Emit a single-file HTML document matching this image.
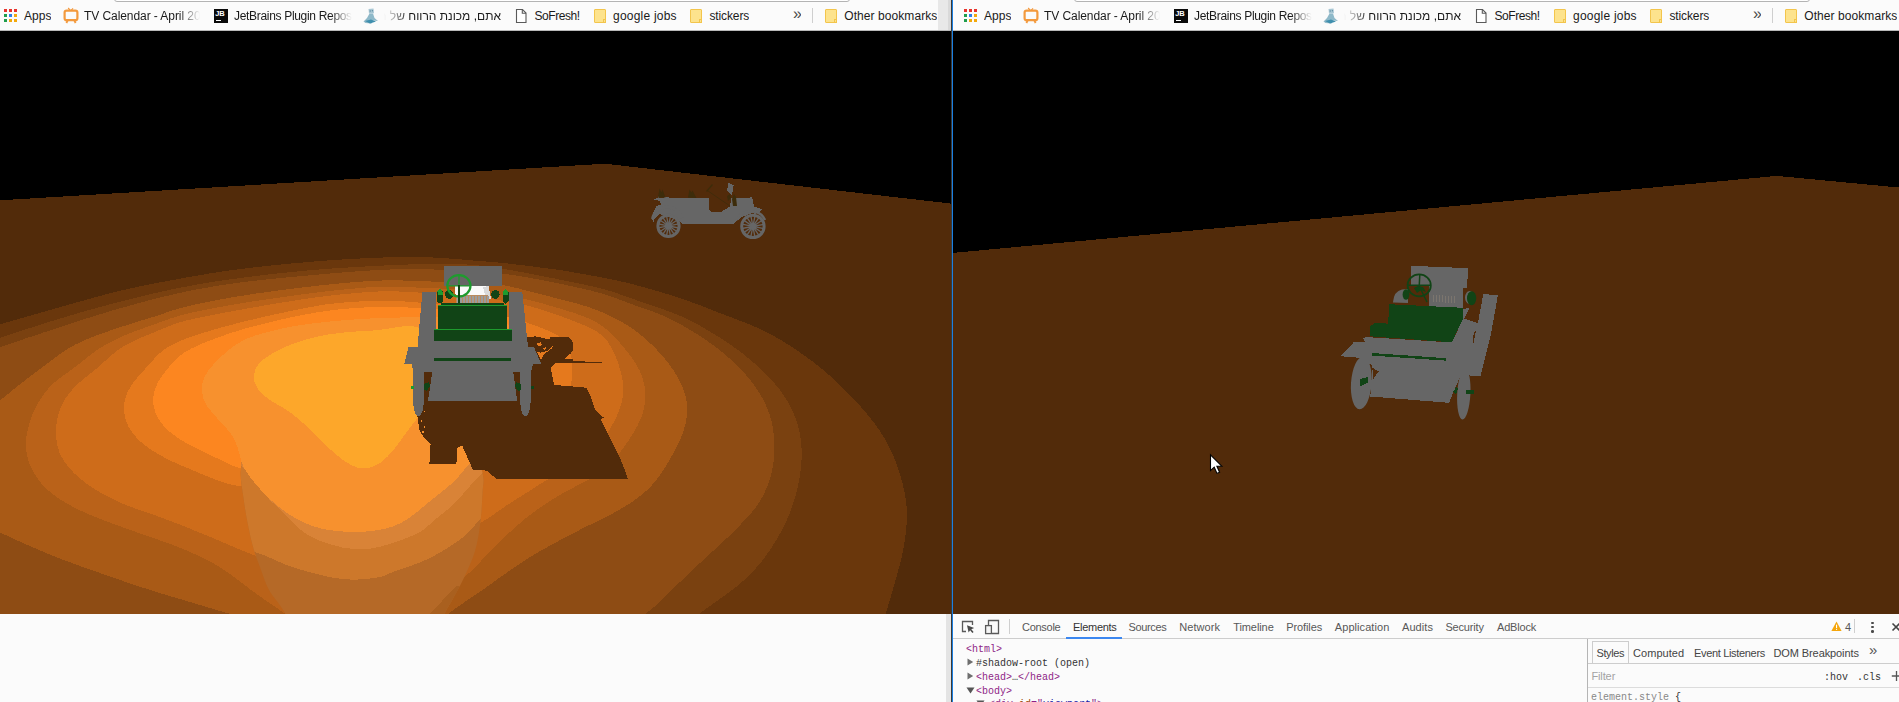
<!DOCTYPE html><html><head><meta charset="utf-8"><title>scene</title><style>
html,body{margin:0;padding:0}
body{width:1899px;height:702px;position:relative;overflow:hidden;background:#fbfbfb;font-family:"Liberation Sans","DejaVu Sans",sans-serif;font-size:12px;color:#111}
.bar{position:absolute;top:0;height:30px;background:#fbfbfb;overflow:hidden;border-bottom:1px solid #b9b9b9}
.omni{position:absolute;left:114px;top:-6px;width:736px;height:8px;border:1px solid #b4b4b4;border-radius:3px;background:#fff;box-sizing:border-box}
.dot{position:absolute;width:3px;height:3px;display:block}
.bm{position:absolute;top:9px;line-height:15px;height:16px;white-space:nowrap;overflow:hidden;color:#1a1a1a;font-size:12px}
.fade{-webkit-mask-image:linear-gradient(90deg,#000 82%,transparent 100%);mask-image:linear-gradient(90deg,#000 82%,transparent 100%)}
.fadel{-webkit-mask-image:linear-gradient(270deg,#000 78%,transparent 100%);mask-image:linear-gradient(270deg,#000 78%,transparent 100%)}
.heb{font-family:"Liberation Sans","DejaVu Sans",sans-serif;text-align:right}
.ic{position:absolute;display:block}
.jb{position:absolute;width:14px;height:14px;background:#0a0a0a}
.jb span{position:absolute;left:1.2px;top:1.4px;font:bold 7.5px/8px "Liberation Sans",sans-serif;color:#fff;letter-spacing:-.2px}
.jb i{position:absolute;left:2px;top:11px;width:5px;height:1px;background:#fff}
.folder{position:absolute;top:9px;width:12px;height:14px;background:#fde38d;border:1px solid #f3c54c;box-sizing:border-box;border-radius:1px}
.folder i{position:absolute;right:-1px;bottom:-1px;width:3px;height:4px;border:1px solid #f3c54c;box-sizing:border-box;background:#fde38d}
.chev{font-size:16px;top:6px;color:#4a4a4a;letter-spacing:-.5px}
.bsep{position:absolute;top:8px;width:1px;height:15px;background:#cfcfcf}
.scene{position:absolute;display:block}
#dt{position:absolute;left:0;top:0}
.tb{position:absolute;left:953px;top:614px;width:946px;height:24px;background:#fbfbfb;border-bottom:1px solid #cdcdcd}
.vsep{position:absolute;width:1px;background:#cfcfcf}
.tab{position:absolute;top:620px;line-height:15px;font-size:12px;color:#585858;white-space:nowrap}
.sel{position:absolute;top:637px;height:2px;background:#3b87f0}
.kd{position:absolute;width:2.6px;height:2.6px;border-radius:50%;background:#4a4a4a;display:block}
.row{position:absolute;font:10px/14px "Liberation Mono","DejaVu Sans Mono",monospace;white-space:nowrap;color:#333}
.tg{color:#8e1f86}.an{color:#994500}.av{color:#1a1aa6}.tx{color:#333}
.side{position:absolute;left:1587px;top:639px;width:1px;height:64px;background:#b5b5b5}
.stabline{position:absolute;left:1588px;top:663px;width:311px;height:1px;background:#cdcdcd}
.stab{position:absolute;left:1592px;top:641px;width:37px;height:22px;border:1px solid #cdcdcd;border-bottom:none;box-sizing:border-box;background:#fbfbfb}
.st{top:646px;color:#444}
.chev2{font-size:15px;color:#555}
.flt{top:669px;color:#a3a3a3}
.mono{position:absolute;font:10px/14px "Liberation Mono","DejaVu Sans Mono",monospace;white-space:nowrap;color:#333}
.hov{top:671px}
.fline{position:absolute;left:1588px;top:687px;width:311px;height:1px;background:#dcdcdc}
.es{top:691px}
</style></head><body>
<div style="position:absolute;left:938px;top:0;width:10px;height:30px;background:#e8e8e8"></div>
<div class="bar" style="left:0px;width:938px"><div style="position:absolute;left:0px;top:0">
<div class="omni"></div>
<i class="dot" style="left:4px;top:9px;background:#e8342c"></i>
<i class="dot" style="left:9px;top:9px;background:#e8342c"></i>
<i class="dot" style="left:14px;top:9px;background:#e8342c"></i>
<i class="dot" style="left:4px;top:14px;background:#1f9d4d"></i>
<i class="dot" style="left:9px;top:14px;background:#2e7fe8"></i>
<i class="dot" style="left:14px;top:14px;background:#f3a90b"></i>
<i class="dot" style="left:4px;top:19px;background:#1f9d4d"></i>
<i class="dot" style="left:9px;top:19px;background:#f3a90b"></i>
<i class="dot" style="left:14px;top:19px;background:#f3a90b"></i>
<span class="bm" style="left:24px;font-size:12.0px;letter-spacing:0.010px">Apps</span>
<svg class="ic" style="left:63px;top:7px" width="16" height="17" viewBox="0 0 16 17"><path d="M5.2,1 L7.2,3.4 M10,1.4 L8.2,3.4" stroke="#f39a3e" stroke-width="1.2" fill="none"/><rect x="1.6" y="3.6" width="12.8" height="9.6" rx="2" fill="none" stroke="#f39a3e" stroke-width="2.2"/><path d="M4.6,13.5 L3.4,16 M11.4,13.5 L12.6,16" stroke="#f39a3e" stroke-width="1.8" fill="none"/></svg>
<span class="bm fade" style="left:84px;font-size:12.0px;letter-spacing:-0.071px;width:116px">TV Calendar - April 2017</span>
<div class="jb" style="left:214px;top:9px"><span>JB</span><i></i></div>
<span class="bm fade" style="left:234px;font-size:12.0px;letter-spacing:-0.315px;width:118px">JetBrains Plugin Repository</span>
<svg class="ic" style="left:363px;top:8px" width="16" height="16" viewBox="0 0 16 16"><path d="M5.5,1 L10.5,0.6 L11,5.2 L6,5.6Z" fill="#a9c7d4"/><path d="M6.5,5.5 L10,5.5 L11.5,10 L15,13 L9.5,12.5 L8.5,15.5 L2.5,15 L0.5,13.5 L4,10Z" fill="#8fb9c9"/><path d="M2,13 L8,11.5 L13,13.5 L7,15.5Z" fill="#3f8fae"/><circle cx="7.2" cy="3" r=".7" fill="#5d8ea3"/><circle cx="9.4" cy="2.8" r=".7" fill="#5d8ea3"/></svg>
<span class="bm heb fadel" style="left:384px;width:117px" dir="rtl">אתם, מכונת הרווח של המדינה</span>
<svg class="ic" style="left:515px;top:8px" width="13" height="16" viewBox="0 0 13 16"><path d="M1.5,1.5 H7.5 L11,5 V14.5 H1.5Z" fill="#fff" stroke="#5a5a5a" stroke-width="1.1"/><path d="M7.3,1.5 V5.2 H11" fill="none" stroke="#5a5a5a" stroke-width="1.1"/></svg>
<span class="bm" style="left:534.4px;font-size:12.0px;letter-spacing:-0.411px">SoFresh!</span>
<div class="folder" style="left:594px"><i></i></div>
<div class="folder" style="left:690px"><i></i></div>
<div class="folder" style="left:825px"><i></i></div>
<span class="bm" style="left:613px;font-size:12.0px;letter-spacing:0.219px">google jobs</span>
<span class="bm" style="left:709.4px;font-size:12.0px;letter-spacing:-0.109px">stickers</span>
<span class="bm chev" style="left:793px">»</span>
<div class="bsep" style="left:812px"></div>
<span class="bm" style="left:844.3px;font-size:12.0px;letter-spacing:0.070px">Other bookmarks</span>
</div></div>
<div style="position:absolute;left:948px;top:0;width:3px;height:30px;background:#d9d9d9"></div>
<div style="position:absolute;left:938px;top:30px;width:13px;height:1px;background:#b9b9b9"></div>
<div class="bar" style="left:953px;width:946px"><div style="position:absolute;left:7px;top:0">
<div class="omni"></div>
<i class="dot" style="left:4px;top:9px;background:#e8342c"></i>
<i class="dot" style="left:9px;top:9px;background:#e8342c"></i>
<i class="dot" style="left:14px;top:9px;background:#e8342c"></i>
<i class="dot" style="left:4px;top:14px;background:#1f9d4d"></i>
<i class="dot" style="left:9px;top:14px;background:#2e7fe8"></i>
<i class="dot" style="left:14px;top:14px;background:#f3a90b"></i>
<i class="dot" style="left:4px;top:19px;background:#1f9d4d"></i>
<i class="dot" style="left:9px;top:19px;background:#f3a90b"></i>
<i class="dot" style="left:14px;top:19px;background:#f3a90b"></i>
<span class="bm" style="left:24px;font-size:12.0px;letter-spacing:0.010px">Apps</span>
<svg class="ic" style="left:63px;top:7px" width="16" height="17" viewBox="0 0 16 17"><path d="M5.2,1 L7.2,3.4 M10,1.4 L8.2,3.4" stroke="#f39a3e" stroke-width="1.2" fill="none"/><rect x="1.6" y="3.6" width="12.8" height="9.6" rx="2" fill="none" stroke="#f39a3e" stroke-width="2.2"/><path d="M4.6,13.5 L3.4,16 M11.4,13.5 L12.6,16" stroke="#f39a3e" stroke-width="1.8" fill="none"/></svg>
<span class="bm fade" style="left:84px;font-size:12.0px;letter-spacing:-0.071px;width:116px">TV Calendar - April 2017</span>
<div class="jb" style="left:214px;top:9px"><span>JB</span><i></i></div>
<span class="bm fade" style="left:234px;font-size:12.0px;letter-spacing:-0.315px;width:118px">JetBrains Plugin Repository</span>
<svg class="ic" style="left:363px;top:8px" width="16" height="16" viewBox="0 0 16 16"><path d="M5.5,1 L10.5,0.6 L11,5.2 L6,5.6Z" fill="#a9c7d4"/><path d="M6.5,5.5 L10,5.5 L11.5,10 L15,13 L9.5,12.5 L8.5,15.5 L2.5,15 L0.5,13.5 L4,10Z" fill="#8fb9c9"/><path d="M2,13 L8,11.5 L13,13.5 L7,15.5Z" fill="#3f8fae"/><circle cx="7.2" cy="3" r=".7" fill="#5d8ea3"/><circle cx="9.4" cy="2.8" r=".7" fill="#5d8ea3"/></svg>
<span class="bm heb fadel" style="left:384px;width:117px" dir="rtl">אתם, מכונת הרווח של המדינה</span>
<svg class="ic" style="left:515px;top:8px" width="13" height="16" viewBox="0 0 13 16"><path d="M1.5,1.5 H7.5 L11,5 V14.5 H1.5Z" fill="#fff" stroke="#5a5a5a" stroke-width="1.1"/><path d="M7.3,1.5 V5.2 H11" fill="none" stroke="#5a5a5a" stroke-width="1.1"/></svg>
<span class="bm" style="left:534.4px;font-size:12.0px;letter-spacing:-0.411px">SoFresh!</span>
<div class="folder" style="left:594px"><i></i></div>
<div class="folder" style="left:690px"><i></i></div>
<div class="folder" style="left:825px"><i></i></div>
<span class="bm" style="left:613px;font-size:12.0px;letter-spacing:0.219px">google jobs</span>
<span class="bm" style="left:709.4px;font-size:12.0px;letter-spacing:-0.109px">stickers</span>
<span class="bm chev" style="left:793px">»</span>
<div class="bsep" style="left:812px"></div>
<span class="bm" style="left:844.3px;font-size:12.0px;letter-spacing:0.070px">Other bookmarks</span>
</div></div>
<svg class="scene" style="left:0;top:31px" width="951" height="583" viewBox="0 31 951 583" shape-rendering="crispEdges">
<rect x="0" y="31" width="951" height="583" fill="#000"/>
<polygon points="0,200.3 605,163.7 951,203.6 951,614 0,614" fill="#522b0a"/>
<path d="M-10.0,327.0 L-3.4,325.2 L3.6,323.3 L10.7,321.2 L18.3,319.0 L26.4,316.7 L34.9,314.3 L43.5,311.8 L52.0,309.4 L60.3,307.1 L68.2,304.8 L76.1,302.6 L83.9,300.4 L91.7,298.2 L99.5,296.1 L107.3,294.0 L115.2,292.0 L123.1,290.1 L131.2,288.3 L139.3,286.5 L147.4,284.9 L155.5,283.3 L163.5,281.7 L171.6,280.2 L179.6,278.8 L187.5,277.3 L195.3,276.0 L203.0,274.6 L210.7,273.3 L218.6,272.1 L226.8,270.8 L235.1,269.7 L243.2,268.7 L251.2,267.7 L259.2,266.8 L267.3,265.9 L275.7,265.1 L284.1,264.2 L292.5,263.4 L300.7,262.7 L308.7,262.0 L316.7,261.3 L325.0,260.7 L333.6,260.0 L342.2,259.5 L350.6,259.0 L358.6,258.6 L366.2,258.2 L373.7,257.9 L381.5,257.6 L389.6,257.2 L397.7,257.0 L405.4,256.9 L413.0,256.9 L420.6,257.0 L428.5,257.3 L436.5,257.7 L444.6,258.2 L452.8,258.8 L461.1,259.4 L469.5,260.2 L477.7,260.9 L486.0,261.5 L494.3,262.2 L502.5,262.9 L510.6,263.8 L518.8,264.8 L527.1,265.8 L535.6,266.9 L544.2,268.0 L552.8,269.1 L561.3,270.3 L569.7,271.7 L577.9,273.1 L586.2,274.6 L594.4,276.1 L602.6,277.6 L610.5,279.1 L618.5,280.9 L626.5,282.7 L634.3,284.7 L641.9,286.8 L649.7,288.9 L657.6,291.2 L665.7,293.6 L673.8,296.1 L681.8,298.8 L689.7,301.5 L697.6,304.4 L705.5,307.4 L713.2,310.4 L720.7,313.4 L728.1,316.2 L735.7,319.1 L743.3,322.0 L750.6,324.8 L757.7,327.9 L764.8,331.2 L771.8,334.9 L778.9,338.9 L785.8,343.1 L792.7,347.5 L799.5,352.1 L806.2,356.8 L812.7,361.6 L819.1,366.6 L825.4,371.8 L831.5,377.2 L837.5,382.7 L843.4,388.4 L849.1,394.2 L854.7,400.0 L860.2,406.0 L865.5,412.1 L870.8,418.6 L875.9,425.3 L880.7,432.2 L885.1,439.4 L889.1,446.8 L892.7,454.3 L895.8,461.9 L898.5,469.6 L900.8,477.2 L902.9,484.9 L904.6,492.7 L906.0,500.5 L906.8,508.5 L906.9,516.5 L906.6,524.5 L905.8,532.6 L904.7,540.8 L903.3,549.1 L901.6,557.4 L899.5,565.7 L897.3,573.8 L895.1,581.8 L892.8,589.7 L890.5,597.6 L888.2,605.5 L885.8,613.4 L883.4,621.5 L881.1,629.3 L879.0,636.6 L878.0,640.0 L878.0,660 L-30,660 L-30,327.0 Z" fill="#6a370c"/>
<path d="M-10.0,341.0 L-3.4,338.8 L3.6,336.6 L10.7,334.2 L18.3,331.8 L26.4,329.2 L34.9,326.4 L43.5,323.7 L52.0,321.0 L60.3,318.5 L68.2,316.1 L76.1,313.8 L83.9,311.5 L91.7,309.3 L99.5,307.2 L107.3,305.0 L115.1,303.0 L123.0,300.9 L130.8,299.0 L138.7,297.0 L146.5,295.1 L154.4,293.3 L162.2,291.5 L170.0,289.8 L177.8,288.2 L185.6,286.7 L193.3,285.2 L201.0,283.9 L208.8,282.6 L216.6,281.3 L224.7,280.1 L233.0,279.0 L241.1,277.9 L248.8,276.9 L256.4,275.9 L264.1,275.0 L272.0,274.1 L280.0,273.2 L288.2,272.4 L296.6,271.5 L305.0,270.7 L313.4,270.0 L321.7,269.3 L329.8,268.7 L338.0,268.1 L346.4,267.6 L354.9,267.1 L363.4,266.6 L371.9,266.1 L380.3,265.7 L388.5,265.3 L396.4,264.9 L404.1,264.6 L412.1,264.4 L420.6,264.1 L429.5,263.9 L438.1,263.8 L446.2,263.8 L453.9,263.9 L461.3,264.2 L468.9,264.6 L476.7,265.2 L484.6,266.1 L492.4,267.1 L500.1,268.3 L507.8,269.6 L515.6,271.0 L523.4,272.4 L531.3,273.9 L539.3,275.5 L547.4,277.1 L555.5,278.7 L563.6,280.4 L571.9,282.0 L580.2,283.7 L588.2,285.5 L596.0,287.2 L603.5,289.1 L610.9,291.3 L618.1,293.7 L625.5,296.3 L633.1,299.0 L640.9,301.7 L649.0,304.4 L657.3,307.3 L665.6,310.2 L673.5,313.1 L681.2,316.3 L688.6,319.6 L695.6,323.2 L702.4,327.1 L709.1,331.1 L716.1,335.3 L723.1,339.8 L730.1,344.4 L737.0,349.3 L743.7,354.4 L750.2,359.7 L756.5,365.1 L762.5,370.6 L768.3,376.4 L773.9,382.6 L779.1,388.9 L783.9,395.6 L788.2,402.6 L792.0,409.9 L795.2,417.5 L797.8,425.2 L799.7,433.2 L801.0,441.2 L801.6,449.2 L801.7,457.4 L801.2,465.6 L800.2,473.8 L798.8,482.1 L797.0,490.2 L794.8,498.2 L792.3,506.1 L789.4,513.9 L786.1,521.7 L782.4,529.2 L778.4,536.5 L774.0,543.7 L769.4,550.8 L764.6,557.5 L759.6,564.0 L754.3,570.0 L748.7,575.7 L742.9,581.1 L736.8,586.3 L730.4,591.3 L723.9,596.1 L717.1,600.9 L710.3,605.7 L703.3,610.8 L696.3,616.1 L689.3,621.9 L682.4,627.6 L676.1,633.0 L670.6,637.8 L668.0,640.0 L668.0,660 L-30,660 L-30,341.0 Z" fill="#7a4110"/>
<path d="M-10.0,351.0 L-3.4,348.5 L3.6,346.1 L10.7,343.6 L18.3,341.0 L26.4,338.2 L34.9,335.4 L43.5,332.5 L52.0,329.7 L60.3,327.0 L68.2,324.4 L76.1,321.9 L83.9,319.3 L91.7,316.9 L99.5,314.4 L107.3,312.1 L115.1,309.7 L123.0,307.5 L130.8,305.3 L138.7,303.1 L146.5,301.0 L154.4,299.0 L162.2,297.0 L170.0,295.2 L177.8,293.4 L185.6,291.7 L193.3,290.1 L201.0,288.6 L208.8,287.3 L216.6,285.9 L224.7,284.7 L233.0,283.5 L241.2,282.4 L249.2,281.4 L257.2,280.5 L265.3,279.6 L273.6,278.8 L282.0,277.9 L290.4,277.1 L298.7,276.3 L306.7,275.6 L314.7,274.9 L322.9,274.2 L331.5,273.4 L340.1,272.7 L348.5,272.0 L356.6,271.4 L364.3,270.9 L371.8,270.4 L379.3,270.0 L386.9,269.6 L394.6,269.4 L402.2,269.2 L410.0,269.2 L418.0,269.3 L426.1,269.3 L434.5,269.5 L443.1,269.6 L451.7,269.9 L460.2,270.1 L468.5,270.5 L476.6,271.0 L484.6,271.6 L492.4,272.3 L500.1,273.2 L507.8,274.3 L515.6,275.4 L523.4,276.7 L531.3,278.1 L539.3,279.6 L547.4,281.2 L555.5,282.8 L563.6,284.5 L571.9,286.3 L580.2,288.1 L588.2,289.9 L596.0,291.9 L603.7,294.0 L611.4,296.6 L619.0,299.4 L626.4,302.2 L634.0,305.0 L641.8,307.7 L649.7,310.4 L657.6,313.4 L665.2,316.6 L672.6,320.2 L679.9,324.0 L687.0,328.0 L694.0,332.2 L700.8,336.6 L707.5,341.1 L714.1,345.8 L720.5,350.8 L726.8,356.0 L732.9,361.5 L738.8,367.2 L744.5,373.2 L750.0,379.7 L755.1,386.4 L759.7,393.4 L763.8,400.6 L767.2,408.0 L770.0,415.6 L772.0,423.4 L773.4,431.4 L774.1,439.6 L774.4,447.8 L774.1,456.0 L773.3,464.1 L771.8,472.0 L769.6,479.8 L766.9,487.4 L763.5,494.9 L759.5,502.0 L754.8,508.6 L749.6,514.8 L744.1,520.8 L738.4,526.7 L732.5,532.6 L726.5,538.5 L720.3,544.3 L714.0,550.1 L707.7,555.9 L701.4,561.7 L695.1,567.6 L688.9,573.4 L682.8,579.3 L676.7,585.2 L670.7,591.2 L664.8,597.0 L658.9,602.7 L652.6,608.2 L645.9,613.6 L638.8,619.0 L631.5,624.4 L624.1,629.8 L617.4,634.6 L611.4,639.0 L610.0,640.0 L610.0,660 L-30,660 L-30,351.0 Z" fill="#8e4c14"/>
<path d="M-10.0,408.0 L-3.9,403.5 L2.4,398.6 L8.7,393.5 L15.1,388.2 L21.7,382.9 L28.4,377.8 L35.1,372.8 L41.9,367.7 L48.6,362.6 L55.3,357.5 L61.9,352.7 L68.6,348.4 L75.7,344.4 L83.0,340.9 L90.6,337.7 L98.5,334.7 L106.7,331.8 L114.9,329.0 L123.1,326.3 L131.3,323.7 L139.4,321.1 L147.3,318.7 L154.9,316.4 L162.1,314.0 L169.2,311.5 L176.5,309.2 L183.9,307.2 L191.2,305.4 L198.6,303.8 L206.5,302.1 L215.0,300.5 L223.7,298.9 L232.6,297.3 L241.1,295.9 L249.2,294.6 L257.2,293.4 L265.3,292.3 L273.6,291.2 L282.0,290.0 L290.4,289.0 L298.7,287.9 L306.7,287.0 L314.7,286.0 L322.9,285.1 L331.5,284.2 L340.1,283.4 L348.5,282.6 L356.6,282.0 L364.3,281.4 L371.8,280.9 L379.5,280.6 L387.6,280.3 L395.7,280.3 L403.4,280.5 L410.9,280.7 L418.3,281.0 L425.8,281.3 L433.7,281.6 L441.9,281.9 L450.1,282.2 L458.3,282.5 L466.9,282.8 L475.6,283.1 L484.1,283.5 L492.3,284.0 L500.4,284.8 L508.4,286.1 L516.2,287.9 L523.8,289.9 L531.6,291.9 L539.6,294.0 L547.7,296.0 L555.8,298.1 L563.9,300.1 L571.9,302.2 L579.7,304.4 L587.3,306.7 L594.8,309.3 L602.3,312.3 L609.8,315.7 L617.1,319.4 L624.4,323.5 L631.5,328.0 L638.3,332.9 L644.8,338.3 L651.0,344.0 L657.0,350.0 L662.7,356.3 L668.1,362.8 L673.0,369.7 L677.4,376.7 L681.2,384.1 L684.2,391.6 L686.3,399.2 L687.2,407.1 L687.0,415.2 L685.6,423.3 L683.3,431.5 L680.3,439.4 L676.7,446.9 L672.9,454.0 L668.9,460.9 L664.8,467.8 L660.2,474.7 L655.2,481.5 L649.8,487.5 L644.0,492.9 L637.8,497.8 L631.1,502.5 L624.2,506.9 L617.3,510.9 L610.4,514.7 L603.3,518.3 L595.9,521.9 L588.5,525.5 L581.1,529.2 L573.9,532.9 L566.8,536.6 L559.8,540.3 L552.7,544.1 L545.7,548.0 L538.6,552.0 L531.5,556.2 L524.6,560.6 L517.7,565.1 L510.7,569.9 L503.9,574.7 L497.1,579.5 L490.6,584.2 L484.1,588.8 L477.5,593.4 L470.6,598.1 L463.7,602.7 L457.1,607.3 L450.5,612.2 L443.9,617.7 L437.2,623.7 L430.8,629.6 L425.1,635.1 L420.0,640.0 L420.0,660 L275.0,660 L275.0,626.0 L268.4,624.2 L261.0,622.2 L252.7,620.0 L243.8,617.6 L235.1,615.2 L226.7,612.9 L218.7,610.6 L210.9,608.3 L203.2,606.0 L195.6,603.7 L187.9,601.4 L180.2,599.1 L172.4,596.8 L164.3,594.4 L156.3,591.9 L148.3,589.4 L140.5,586.9 L132.8,584.3 L125.0,581.7 L117.2,579.0 L109.3,576.3 L101.5,573.5 L93.7,570.8 L85.9,568.1 L78.1,565.3 L70.3,562.4 L62.4,559.5 L54.6,556.4 L46.6,553.2 L38.5,549.8 L30.2,546.2 L22.1,542.6 L14.4,539.1 L7.2,535.8 L0.1,532.6 L-6.7,529.5 L-10.0,528.0 L-30,528.0 L-30,408.0 Z" fill="#a95a16"/>
<path d="M26.0,439.5 L27.4,431.3 L29.6,422.9 L32.4,414.7 L35.9,406.9 L40.0,399.7 L44.6,393.0 L49.9,386.8 L55.9,381.2 L62.5,376.2 L69.2,371.3 L75.9,366.4 L82.3,361.3 L88.6,356.3 L95.1,351.4 L101.9,346.9 L109.1,342.8 L116.7,338.9 L124.6,335.4 L132.6,332.2 L140.7,329.2 L148.7,326.4 L156.4,323.6 L163.8,320.9 L171.0,318.3 L178.3,316.0 L185.7,314.0 L193.0,312.3 L200.6,310.7 L208.6,309.2 L217.1,307.5 L226.0,305.9 L234.7,304.4 L243.1,303.0 L251.2,301.7 L259.2,300.5 L267.3,299.3 L275.7,298.1 L284.1,296.9 L292.5,295.7 L300.7,294.6 L308.7,293.5 L316.7,292.5 L325.0,291.5 L333.6,290.6 L342.2,289.7 L350.6,288.9 L358.6,288.1 L366.2,287.5 L373.6,287.1 L381.2,286.7 L388.8,286.6 L396.5,286.7 L404.1,286.9 L411.9,287.3 L419.7,287.7 L427.7,288.0 L435.9,288.3 L444.4,288.7 L453.0,289.2 L461.5,289.9 L469.9,290.6 L478.3,291.5 L486.7,292.6 L495.1,293.8 L503.3,295.1 L511.2,296.4 L518.9,297.8 L526.9,299.5 L535.0,301.4 L543.0,303.6 L550.6,305.9 L558.3,308.1 L566.0,310.5 L573.9,312.9 L581.6,315.6 L589.1,318.6 L596.3,322.2 L603.2,326.6 L609.6,332.0 L615.6,338.0 L621.3,344.5 L626.7,351.0 L631.8,357.6 L636.3,364.3 L640.0,371.4 L642.9,379.0 L644.7,386.9 L645.4,395.1 L645.0,403.1 L643.4,411.0 L640.8,418.6 L637.3,426.1 L633.1,433.4 L628.4,440.8 L623.3,447.9 L618.0,454.8 L612.4,461.3 L606.5,467.2 L600.2,472.5 L593.4,477.1 L586.0,481.2 L578.4,485.0 L570.8,488.9 L563.5,492.9 L556.4,497.0 L549.5,501.3 L542.6,505.8 L535.9,510.5 L529.2,515.5 L522.7,520.8 L516.3,526.3 L510.1,531.9 L504.1,537.7 L498.1,543.5 L492.3,549.4 L486.7,555.1 L481.4,560.6 L476.1,566.2 L470.3,571.8 L464.2,577.5 L458.2,582.8 L452.5,587.9 L446.6,593.3 L440.3,598.8 L433.6,604.4 L426.5,609.8 L419.2,614.8 L411.6,619.2 L404.0,622.8 L396.3,625.5 L388.4,627.4 L380.2,628.7 L371.6,629.5 L362.7,630.0 L353.8,630.2 L345.0,630.1 L336.5,629.9 L328.6,629.4 L321.0,628.9 L313.6,627.9 L305.9,626.1 L298.5,623.1 L291.9,619.1 L285.9,614.5 L279.5,609.8 L272.7,605.1 L265.8,600.4 L259.1,595.8 L252.5,591.0 L246.1,586.2 L239.7,581.3 L233.3,576.5 L226.7,571.7 L219.7,567.2 L212.7,563.0 L205.8,559.3 L198.7,555.9 L191.3,552.5 L183.7,549.3 L176.0,546.2 L168.3,543.2 L160.5,540.5 L152.6,537.7 L144.5,535.0 L136.5,532.2 L128.6,529.4 L120.7,526.5 L112.7,523.6 L104.9,520.7 L97.2,517.7 L89.8,514.7 L82.4,511.4 L74.8,507.8 L67.4,503.8 L60.4,499.6 L53.7,494.9 L47.5,489.7 L41.8,483.9 L36.8,477.4 L32.6,470.5 L29.2,463.0 L27.0,455.4 L25.9,447.5Z" fill="#ba6219"/>
<path d="M56.0,431.6 L56.5,423.6 L58.0,415.6 L60.6,407.9 L64.2,400.4 L68.9,393.5 L74.5,387.2 L80.7,381.4 L87.3,376.0 L94.0,370.7 L100.4,365.2 L106.5,359.7 L112.7,354.2 L119.3,349.1 L126.3,344.7 L133.8,340.9 L141.5,337.5 L149.3,334.3 L156.7,331.2 L163.9,328.2 L171.0,325.3 L178.3,322.8 L185.7,320.7 L193.0,318.9 L200.6,317.3 L208.6,315.7 L217.1,314.0 L226.0,312.4 L234.7,310.8 L243.1,309.3 L251.2,307.8 L259.2,306.4 L267.3,305.0 L275.7,303.6 L284.1,302.2 L292.5,300.9 L300.7,299.6 L308.7,298.4 L316.7,297.3 L325.0,296.2 L333.6,295.2 L342.2,294.3 L350.6,293.5 L358.6,292.8 L366.2,292.2 L373.6,291.7 L381.2,291.4 L388.8,291.3 L396.5,291.4 L404.1,291.8 L411.9,292.2 L419.7,292.6 L427.7,293.0 L435.9,293.5 L444.4,294.0 L453.0,294.6 L461.5,295.3 L469.9,296.1 L478.3,297.1 L486.7,298.2 L495.1,299.5 L503.3,300.8 L511.2,302.2 L518.9,303.7 L526.7,305.5 L534.7,307.6 L542.5,309.9 L550.1,312.4 L557.7,315.1 L565.6,318.0 L573.5,321.0 L581.4,324.1 L589.0,327.3 L596.2,331.0 L602.5,335.8 L607.6,341.6 L611.9,348.5 L615.4,356.0 L618.4,363.8 L620.8,371.9 L622.6,380.0 L623.4,388.0 L623.0,396.0 L621.4,403.8 L618.7,411.7 L615.3,419.3 L611.4,426.5 L607.1,433.4 L602.4,439.9 L597.2,446.4 L591.3,452.5 L584.8,458.0 L577.8,462.8 L570.5,467.1 L563.2,471.2 L555.7,475.1 L548.4,479.1 L541.3,483.3 L534.3,487.7 L527.3,492.3 L520.2,496.8 L513.2,501.2 L506.6,505.4 L500.6,509.6 L494.5,513.9 L487.8,518.4 L480.7,522.8 L473.9,526.8 L467.4,530.5 L460.9,534.3 L453.9,538.3 L446.5,542.3 L438.8,546.4 L430.8,550.2 L422.7,553.9 L414.5,557.1 L406.3,559.8 L398.3,562.0 L390.4,563.7 L382.3,565.0 L374.0,566.0 L365.4,566.7 L356.8,567.3 L348.1,567.6 L339.6,567.8 L331.2,567.8 L323.2,567.7 L315.5,567.6 L308.0,567.3 L300.1,566.7 L291.4,565.7 L282.5,564.1 L274.1,562.1 L266.6,559.8 L259.8,557.4 L253.0,554.9 L246.0,552.1 L238.9,549.2 L231.8,546.1 L224.6,543.0 L217.1,539.8 L209.3,536.6 L201.6,533.4 L194.0,530.3 L186.4,527.2 L178.7,524.1 L170.8,521.1 L162.9,518.2 L155.0,515.3 L147.0,512.6 L139.0,509.8 L131.1,507.0 L123.3,503.9 L115.5,500.4 L107.9,496.6 L100.6,492.7 L93.6,488.4 L86.8,483.8 L80.2,478.7 L74.1,473.2 L68.6,467.2 L63.7,460.6 L59.8,453.4 L57.3,445.7 L56.2,437.7Z" fill="#ce6c1a"/>
<path d="M123.8,408.1 L124.8,399.7 L127.8,391.6 L132.2,384.2 L137.5,377.4 L143.2,371.0 L148.8,364.8 L154.3,358.7 L159.9,353.1 L165.9,348.4 L172.7,344.4 L180.0,341.0 L187.2,338.2 L194.4,335.7 L201.7,333.3 L209.6,330.9 L217.8,328.5 L226.4,326.1 L235.0,323.9 L243.3,321.7 L251.5,319.8 L259.7,317.8 L268.1,315.9 L276.8,314.0 L285.4,312.1 L293.8,310.3 L301.9,308.7 L309.8,307.2 L317.7,305.8 L326.1,304.4 L334.7,303.4 L342.9,302.6 L350.4,302.0 L357.5,301.6 L364.8,301.2 L372.1,300.9 L379.5,300.7 L387.0,300.8 L394.7,301.0 L403.0,301.4 L411.4,302.0 L419.6,302.6 L427.6,303.2 L435.9,303.9 L444.3,304.7 L452.9,305.7 L461.5,306.9 L470.1,308.2 L478.6,309.9 L487.3,311.8 L496.0,313.9 L504.5,316.1 L512.5,318.3 L520.1,320.4 L527.5,322.8 L534.8,325.4 L542.0,328.2 L549.4,331.2 L556.6,334.8 L563.0,339.2 L567.7,345.1 L570.6,352.3 L572.0,360.5 L572.5,368.9 L572.2,377.2 L570.8,385.1 L568.1,392.3 L564.1,399.1 L559.4,405.6 L554.5,412.0 L549.4,418.4 L544.0,424.8 L538.4,431.1 L532.4,437.0 L526.0,442.5 L519.2,447.4 L512.1,451.8 L505.2,455.6 L498.6,459.0 L492.2,462.1 L485.6,465.0 L478.5,468.0 L471.7,471.0 L465.2,474.1 L458.5,477.4 L451.4,480.9 L443.8,484.5 L435.8,488.0 L427.6,491.4 L419.2,494.5 L410.8,497.1 L402.5,499.1 L394.5,500.5 L386.6,501.5 L378.4,502.2 L370.1,502.6 L361.6,502.8 L353.0,502.8 L344.4,502.7 L336.0,502.4 L327.7,502.0 L319.8,501.5 L312.1,500.9 L304.4,500.3 L296.2,499.3 L287.3,497.8 L278.3,496.0 L269.8,493.8 L262.1,491.6 L255.1,489.5 L248.5,487.8 L241.8,486.5 L234.9,485.4 L227.8,483.8 L220.3,481.3 L212.3,478.3 L204.0,475.0 L195.8,471.6 L187.8,468.2 L180.0,464.9 L172.4,461.5 L165.1,457.9 L157.9,454.0 L150.9,449.6 L144.3,444.8 L138.2,439.5 L132.8,433.3 L128.3,426.3 L125.3,418.5 L123.9,410.2Z" fill="#e5791d"/>
<path d="M153.2,398.3 L154.6,390.1 L157.8,382.6 L162.1,375.7 L166.9,369.4 L172.0,363.4 L177.5,357.7 L183.6,352.9 L190.1,349.2 L196.8,345.9 L204.1,342.8 L212.0,339.7 L220.3,336.7 L228.8,333.7 L237.1,331.0 L245.1,328.6 L252.8,326.5 L260.6,324.5 L268.7,322.5 L276.8,320.5 L285.0,318.7 L293.2,316.9 L301.2,315.3 L309.0,313.8 L316.9,312.4 L325.1,311.2 L333.6,310.0 L342.2,309.1 L350.6,308.4 L358.6,307.8 L366.2,307.4 L373.6,307.1 L381.2,306.9 L388.8,306.8 L396.5,307.0 L404.1,307.3 L412.0,307.7 L419.9,308.1 L428.1,308.5 L436.5,308.9 L445.2,309.4 L453.8,309.9 L462.3,310.4 L470.8,311.0 L479.5,311.7 L488.2,312.5 L496.5,313.5 L503.8,315.1 L509.9,317.9 L514.4,322.3 L517.2,328.6 L518.6,336.3 L519.3,344.3 L519.8,352.3 L520.2,360.5 L520.4,369.1 L520.5,377.7 L520.1,386.2 L519.3,394.4 L517.8,402.5 L515.5,410.5 L512.4,418.1 L508.8,425.4 L504.9,432.2 L500.8,438.8 L496.5,445.3 L491.7,451.5 L485.9,457.0 L479.2,461.5 L472.2,464.9 L465.2,467.5 L458.1,469.6 L450.5,471.6 L442.4,473.4 L433.9,475.1 L425.1,476.6 L416.2,478.0 L407.3,479.1 L398.8,479.9 L390.7,480.6 L382.7,481.0 L374.5,481.3 L366.1,481.5 L357.6,481.6 L349.0,481.6 L340.4,481.5 L332.1,481.4 L323.9,481.1 L316.1,480.8 L308.4,480.4 L300.4,479.9 L291.7,479.0 L282.5,477.9 L273.5,476.5 L265.2,474.9 L257.5,473.2 L250.3,471.4 L243.2,469.4 L236.0,467.0 L228.9,464.0 L222.1,460.7 L215.0,457.3 L207.6,453.7 L199.9,450.0 L192.1,446.2 L184.5,442.0 L177.2,437.5 L170.4,432.4 L164.3,426.6 L159.2,419.9 L155.4,412.5 L153.5,404.5Z" fill="#fc8620"/>
<clipPath id="cone"><path d="M241.0,469.0 C239.9,478.7 242.3,488.7 243.5,498.0 C244.7,507.3 246.3,516.5 248.0,525.0 C249.7,533.5 251.4,541.5 253.6,549.0 C255.8,556.5 258.4,563.2 261.0,570.0 C263.6,576.8 265.0,582.8 269.0,590.0 C273.0,597.2 280.5,604.7 285.0,613.0 C289.5,621.3 271.5,635.5 296.0,640.0 C320.5,644.5 407.2,644.5 432.0,640.0 C456.8,635.5 441.6,619.8 445.0,613.0 C448.4,606.2 449.3,605.4 452.5,599.5 C455.7,593.6 460.3,585.7 464.0,577.7 C467.7,569.7 472.2,560.7 474.9,551.6 C477.6,542.5 479.0,533.0 480.3,523.2 C481.6,513.4 482.1,501.1 482.5,492.7 C482.9,484.3 484.6,481.8 482.5,473.0 C480.4,464.2 480.4,448.8 470.0,440.0 C459.6,431.2 448.3,423.3 420.0,420.0 C391.7,416.7 328.3,416.7 300.0,420.0 C271.7,423.3 259.8,431.8 250.0,440.0 C240.2,448.2 242.1,459.3 241.0,469.0Z"/></clipPath>
<g clip-path="url(#cone)">
<rect x="200" y="400" width="320" height="240" fill="#b56927"/>
<path d=" M200.0,400.0 L520.0,400.0 L520.0,480.0 C513.1,486.9 488.4,511.5 478.6,521.3 C468.8,531.1 469.5,532.4 461.3,538.6 C453.1,544.8 440.7,552.7 429.3,558.3 C417.9,563.9 401.3,568.9 393.1,572.0 C384.9,575.1 386.4,575.7 380.0,577.0 C373.6,578.3 363.4,579.6 355.0,579.6 C346.6,579.6 340.2,579.1 329.7,577.0 C319.1,574.9 304.4,571.1 291.7,566.9 C279.0,562.7 268.9,556.2 253.6,551.7 C238.3,547.2 208.9,542.0 200.0,540.0Z" fill="#cd782b"/>
<path d=" M200.0,400.0 L520.0,400.0 L520.0,440.0 C513.1,446.2 489.6,466.3 478.6,477.0 C467.6,487.7 461.0,497.1 453.9,504.0 C446.8,510.9 442.1,513.8 436.0,518.7 C429.9,523.6 426.3,529.0 417.0,533.6 C407.7,538.2 390.7,544.0 380.4,546.6 C370.1,549.2 363.4,549.5 355.0,549.1 C346.6,548.7 338.1,546.9 329.7,544.1 C321.2,541.4 312.8,538.5 304.3,532.6 C295.9,526.7 285.3,514.6 279.0,508.5 C272.7,502.4 272.2,502.8 266.3,496.0 C260.4,489.2 254.6,477.3 243.5,468.0 C232.4,458.7 207.2,444.7 200.0,440.0Z" fill="#d98337"/>
<polygon points="428,616 450,616 461,586 456,586" fill="#a9601f"/>
</g>
<path d="M201.9,385.3 L204.0,377.8 L208.3,370.6 L213.6,364.3 L219.3,358.4 L225.7,352.5 L232.7,346.9 L240.0,342.2 L247.5,338.5 L255.4,335.5 L263.5,333.1 L271.8,331.0 L279.9,329.1 L287.8,327.3 L295.5,325.9 L303.4,324.7 L311.5,323.6 L319.7,322.6 L327.6,321.7 L335.6,321.0 L343.8,320.3 L352.1,319.6 L360.2,319.1 L368.2,318.6 L376.3,318.2 L384.2,317.9 L391.9,317.7 L399.8,317.5 L408.1,317.4 L416.4,317.4 L424.6,317.4 L433.1,317.4 L441.8,317.4 L450.5,317.5 L458.8,317.6 L466.7,317.9 L475.4,318.2 L484.6,318.5 L492.9,319.1 L500.2,320.5 L506.5,323.3 L511.7,327.7 L515.3,334.5 L517.5,343.3 L518.8,351.2 L519.7,358.7 L520.5,366.9 L521.2,375.8 L521.6,384.9 L521.7,394.1 L521.2,402.9 L520.1,411.0 L518.1,418.4 L514.5,425.6 L509.2,432.6 L502.6,438.9 L495.3,444.6 L488.1,449.6 L481.4,454.1 L475.5,458.5 L469.8,463.5 L465.0,468.8 L460.1,474.8 L454.2,481.2 L448.0,486.8 L441.4,492.2 L434.5,497.6 L427.7,503.0 L421.1,508.6 L414.5,514.0 L407.8,519.0 L400.9,523.0 L393.6,526.2 L386.1,528.5 L378.2,530.1 L370.2,531.2 L362.0,531.8 L353.6,531.9 L345.3,531.7 L337.0,531.1 L328.8,530.0 L320.8,528.4 L312.9,526.1 L305.1,523.1 L297.5,519.4 L290.3,515.2 L283.7,510.6 L277.3,505.6 L271.0,500.2 L265.0,494.4 L259.3,488.2 L253.7,481.7 L248.7,475.2 L244.4,468.7 L241.4,461.5 L239.5,454.1 L237.4,446.7 L234.3,439.3 L230.0,432.5 L224.6,426.2 L218.8,420.0 L212.9,413.5 L207.5,406.7 L203.6,399.3 L201.8,391.3Z" fill="#f7912e"/>
<path d="M253.6,377.6 L255.2,369.0 L259.9,362.3 L266.1,357.4 L272.9,353.2 L280.6,349.1 L288.4,345.6 L295.9,342.8 L303.6,340.3 L311.8,338.0 L320.3,336.0 L328.5,334.5 L336.3,333.4 L344.2,332.5 L352.4,331.8 L360.6,331.2 L368.9,330.8 L377.2,330.2 L385.8,329.0 L394.8,327.5 L403.7,326.3 L412.0,326.1 L419.0,327.7 L424.2,331.3 L427.5,336.8 L429.4,344.0 L430.6,352.6 L431.2,362.1 L431.3,371.8 L431.1,381.2 L430.7,389.7 L430.0,397.5 L427.8,405.5 L423.5,412.2 L418.2,417.5 L413.0,423.6 L408.0,430.3 L403.0,437.1 L398.1,443.9 L393.0,450.6 L387.4,456.7 L381.3,462.1 L374.3,466.2 L366.4,468.4 L358.3,467.9 L350.6,464.8 L343.4,460.2 L336.7,455.1 L330.6,449.6 L324.5,443.8 L318.5,437.8 L312.4,431.7 L306.2,425.8 L299.9,420.2 L293.6,415.0 L286.8,410.0 L279.4,405.6 L271.9,401.4 L264.9,396.3 L258.6,389.9 L254.4,382.0Z" fill="#fda72a"/>
<polygon points="526.0,337.1 535.7,336.4 549.2,339.3 550.6,337.1 569.2,337.1 572.7,342.1 573.4,349.9 570.6,353.5 564.9,358.5 573.4,358.5 573.4,361.3 602.2,361.8 602.2,362.8 556.3,362.8 550.6,367.8 554.2,384.9 586.3,387.7 590.5,396.3 594.8,409.1 601.9,416.2 604.5,417.6 600.5,419.0 622.0,462.5 628.0,479.0 496.4,479.0 487.0,470.7 472.9,469.6 462.3,446.0 457.6,447.0 456.4,463.7 429.4,463.7 430.6,443.7 424.0,438.0 419.5,430.0 417.6,417.9 415.0,400.0 424.0,372.0 520.0,372.0 533.0,365.0" fill="#522b0a"/>
<polygon points="537,352 541,360 544.2,354.2 552,348.4 553,346 548,350.5 541,352.6" fill="#e5791d"/>
<path d="M537,343.2 l3.5,-.8 l1.2,2 l-1.6,2 l-2.6,-1z M543,348.4 l2.4,-1.2 l.6,1.6 l-2.2,1.2z" fill="#e5791d"/>
<path d="M424,411 h1 v1 h-1z M421,420 h1 v2 h-1z M423.5,426 h1 v2 h-1z M422,431 h1.5 v1.5 h-1.5z M440,396 h1 v1 h-1z" fill="#f7912e"/>
<rect x="444" y="266" width="57.5" height="20.3" fill="#666666"/>
<polygon points="454.5,286.5 488.5,286 491,298.5 456,298.5" fill="#fafafa"/>
<polygon points="483,287 488.5,286 491,298.5 486,298.5" fill="#d9d9d9"/>
<rect x="456" y="295" width="32" height="8.5" fill="#b98a5e"/>
<rect x="457" y="295.5" width="1.6" height="8" fill="#9c9c9c"/>
<rect x="460" y="295.5" width="1.6" height="8" fill="#9c9c9c"/>
<rect x="463" y="295.5" width="1.6" height="8" fill="#9c9c9c"/>
<rect x="466" y="295.5" width="1.6" height="8" fill="#9c9c9c"/>
<rect x="469" y="295.5" width="1.6" height="8" fill="#9c9c9c"/>
<rect x="472" y="295.5" width="1.6" height="8" fill="#9c9c9c"/>
<rect x="475" y="295.5" width="1.6" height="8" fill="#9c9c9c"/>
<rect x="478" y="295.5" width="1.6" height="8" fill="#9c9c9c"/>
<rect x="481" y="295.5" width="1.6" height="8" fill="#9c9c9c"/>
<rect x="484" y="295.5" width="1.6" height="8" fill="#9c9c9c"/>
<rect x="487" y="295.5" width="1.6" height="8" fill="#9c9c9c"/>
<polygon points="422.4,292.0 435.9,292.0 435.9,340.0 509.0,340.0 509.0,292.0 522.3,292.0 528.0,347.0 533.9,347.0 541.0,363.5 533.0,363.5 531.0,372.0 513.2,372.0 517.2,400.5 428.0,400.5 432.3,372.0 413.0,372.0 412.0,363.5 404.3,363.5 408.5,347.0 417.5,347.0" fill="#666666"/>
<path d="M412.8,368 L424.2,368 L424,400 Q423,416 418.5,416 Q413.5,416 413,398Z" fill="#666666"/>
<path d="M519.6,368 L531,368 L530.8,398 Q530,416.3 525.6,416.3 Q521,416.3 520,400Z" fill="#666666"/>
<rect x="437.6" y="305.3" width="69.5" height="24.2" fill="#114416"/>
<rect x="441" y="303.3" width="63" height="2.4" fill="#114416"/>
<rect x="433.5" y="329.3" width="78.3" height="11.5" fill="#114416"/>
<rect x="437.6" y="305.3" width="69.5" height="1" fill="#1e9b2e"/>
<rect x="433.5" y="328.8" width="78.3" height="1" fill="#1e9b2e"/>
<rect x="434.2" y="358" width="76.5" height="2.6" fill="#114416"/>
<ellipse cx="449.2" cy="294.4" rx="4.1" ry="4.4" fill="#114416"/>
<ellipse cx="495.4" cy="294.4" rx="4.2" ry="4.4" fill="#114416"/>
<path d="M437,292 q3,-5 6,0 v9 q-3,5 -6,0z" fill="#114416"/><path d="M437.5,291.5 q2.5,-4.5 5,0 v3 h-5z" fill="#1e9b2e"/>
<path d="M502.5,292 q3,-5 6,0 v9 q-3,5 -6,0z" fill="#114416"/><path d="M503,291.5 q2.5,-4.5 5,0 v3 h-5z" fill="#1e9b2e"/>
<g shape-rendering="auto"><ellipse cx="458.9" cy="285.8" rx="11.6" ry="10.7" fill="none" stroke="#1e9b2e" stroke-width="2.2"/><path d="M447.5,285.9 H470.3 M459,275 V284.5" stroke="#1e9b2e" stroke-width="1.4" fill="none"/><path d="M459,285 V304" stroke="#114416" stroke-width="2"/></g>
<path d="M424,384 l5,-2 l1,4 l-3,5 l-3,-1z" fill="#114416"/><path d="M521,384 l-5,-2 l-1,4 l3,5 l3,-1z" fill="#114416"/>
<rect x="411" y="385.5" width="2.5" height="3.5" fill="#1e9b2e"/><rect x="531" y="385.5" width="3" height="3.5" fill="#114416"/>
<polygon points="652.5,199.0 658.0,198.3 657.5,194.0 659.5,198.0 664.5,197.4 709.5,198.5 709.0,209.3 711.3,212.0 721.0,212.0 730.0,206.5 731.2,198.5 737.0,198.0 750.0,198.0 751.0,196.5 752.3,198.5 754.0,206.5 762.6,209.3 760.0,211.5 754.0,212.2 758.0,215.0 752.0,213.0 742.0,217.0 733.5,223.6 682.0,223.6 680.0,221.0 660.0,214.0 655.0,218.0 653.0,224.0 652.0,215.6 656.0,207.0 655.0,206.0 661.0,205.0 660.0,201.0" fill="#666666"/>
<polygon points="728.4,182.5 733.7,185.4 731.8,195.7 727.2,190.5" fill="#666666"/>
<g shape-rendering="auto"><path d="M652.5,219 Q655,207 668,207 Q678,208 682,218" fill="none" stroke="#666666" stroke-width="3"/><path d="M736,220 Q742,210 754,211.5 Q762,213 765,220" fill="none" stroke="#666666" stroke-width="2.6"/></g>
<g shape-rendering="auto">
<path d="M707.3,190.5 L730,206" stroke="#3d2c0a" stroke-width=".8"/><path d="M706.5,191.5 L712.5,184.5" stroke="#3d2c0a" stroke-width="1.2"/>
<path d="M658,197.5 l1.5,-9 l2,4 l1,-3 l3,8z M688,197.5 l1.5,-8 l2,3 l1,-2 l4,7.5z M732,199 l2,-5 l2,3 l1,9 l-4,0z M727,196 l3,-2 l1,4 l-3,3z" fill="#3d2c0a"/>
<circle cx="668.5" cy="225.9" r="10.6" fill="none" stroke="#666666" stroke-width="3"/>
<path d="M658.1,223.8 L678.9,228.0 M659.7,220.0 L677.3,231.8 M662.6,217.1 L674.4,234.7 M666.5,215.5 L670.5,236.3 M670.6,215.5 L666.4,236.3 M674.4,217.1 L662.6,234.7 M677.3,220.0 L659.7,231.8 M678.9,223.9 L658.1,227.9 " stroke="#666666" stroke-width="1.3"/>
<circle cx="668.5" cy="225.9" r="2.5" fill="#666666"/>
<circle cx="752.9" cy="226.4" r="11.2" fill="none" stroke="#666666" stroke-width="3"/>
<path d="M741.9,224.2 L763.9,228.6 M743.6,220.1 L762.2,232.7 M746.7,217.1 L759.1,235.7 M750.8,215.4 L755.0,237.4 M755.1,215.4 L750.7,237.4 M759.2,217.1 L746.6,235.7 M762.2,220.2 L743.6,232.6 M763.9,224.3 L741.9,228.5 " stroke="#666666" stroke-width="1.3"/>
<circle cx="752.9" cy="226.4" r="2.5" fill="#666666"/>
</g>
</svg>
<svg class="scene" style="left:953px;top:31px" width="946" height="583" viewBox="953 31 946 583" shape-rendering="crispEdges">
<rect x="953" y="31" width="946" height="583" fill="#000"/>
<polygon points="953,252.9 1777,175.9 1899,187.5 1899,614 953,614" fill="#522b0a"/>
<g shape-rendering="auto"><ellipse cx="1361.3" cy="383.1" rx="10.3" ry="26.3" fill="#666666" transform="rotate(4 1361.3 383.1)"/>
<ellipse cx="1463.8" cy="394" rx="6.6" ry="25.5" fill="#666666" transform="rotate(3 1463.8 394)"/></g>
<polygon points="1411.0,265.8 1467.9,268.2 1467.2,287.6 1462.7,288.1 1462.7,308.4 1428.8,306.6 1428.8,286.0 1411.0,285.7" fill="#666666"/>
<g shape-rendering="auto"><path d="M1392.9,302.5 Q1394,291 1402,289.5 L1408,289 L1408,303Z" fill="#666666"/></g>
<polygon points="1483.3,294.1 1497.9,295.1 1496,306 1490.8,335 1480.5,376 1470.9,375.8 1462,372 1449,402.8 1370.3,396.5 1372.5,366 1362.6,358 1340.1,356.2 1353.6,342.4 1365.1,342.1 1362.6,337.6 1370.3,337.3 1452,342.5 1462.7,319.3 1463,309 1469.5,308 1464,318.5 1477.9,323" fill="#666666"/>
<polygon points="1372.2,367.7 1378.6,371.5 1373.5,378.6" fill="#522b0a"/>
<polygon points="1474,332 1476,331 1473.5,343 1472.5,342" fill="#522b0a"/>
<polygon points="1388.9,304.2 1462.7,307.8 1462.7,319.3 1451.8,342.3 1370.1,336.3 1369.5,326.4 1375,323 1388.3,323.6" fill="#114416"/>
<polygon points="1372.2,353 1445.5,358.2 1445.5,360.6 1372.2,355.6" fill="#114416"/>
<g shape-rendering="auto">
<ellipse cx="1419.2" cy="285.4" rx="11.6" ry="11" fill="none" stroke="#114416" stroke-width="1.8"/><path d="M1407.5,285.3 H1431 M1419.8,274.5 L1419.3,284.5 M1419.2,286 L1427,302" stroke="#114416" stroke-width="1.5" fill="none"/>
<path d="M1414,288 l4,-2 l5,1 l3,5 l-5,-2 l-4,3z" fill="#114416"/>
<ellipse cx="1406" cy="294.5" rx="3.4" ry="5.2" fill="#114416"/>
<ellipse cx="1469.6" cy="297.5" rx="4.6" ry="6.4" fill="#666666"/><ellipse cx="1471.6" cy="298.2" rx="4.6" ry="7" fill="#114416"/></g>
<rect x="1432.5" y="295.0" width="1.2" height="7" fill="#7b756e"/>
<rect x="1435.5" y="295.1" width="1.2" height="7" fill="#7b756e"/>
<rect x="1438.5" y="295.3" width="1.2" height="7" fill="#7b756e"/>
<rect x="1441.5" y="295.4" width="1.2" height="7" fill="#7b756e"/>
<rect x="1444.5" y="295.6" width="1.2" height="7" fill="#7b756e"/>
<rect x="1447.5" y="295.8" width="1.2" height="7" fill="#7b756e"/>
<rect x="1450.5" y="295.9" width="1.2" height="7" fill="#7b756e"/>
<rect x="1453.5" y="296.1" width="1.2" height="7" fill="#7b756e"/>
<rect x="1466" y="389.5" width="7.5" height="4" fill="#114416"/><path d="M1453,392 l4,-6 l1,3 l-2,6z" fill="#114416"/><path d="M1359.5,379 l8,-2 l0,6 l-7,3z" fill="#114416"/>
<g shape-rendering="auto"><path d="M1210.5,454.8 V470.6 L1214.2,467.2 L1217,473.4 L1219.6,472.3 L1216.9,466.2 L1221.8,466.2Z" fill="#fff" stroke="#000" stroke-width="1.1" stroke-linejoin="miter"/></g>
</svg>
<div style="position:absolute;left:0;top:614px;width:946px;height:88px;background:#fbfbfb"></div>
<div style="position:absolute;left:946px;top:614px;width:5px;height:88px;background:#e4e4e4"></div>
<div id="dt">
<div class="tb"></div>
<svg class="ic" style="left:961px;top:620px" width="15" height="14" viewBox="0 0 15 14"><path d="M11.5,5 V1.5 H1.5 V11.5 H5" fill="none" stroke="#5a5a5a" stroke-width="1.3"/><path d="M6,5.2 L13.2,8 L10.3,9.2 L12.6,12 L11.4,13 L9.1,10.2 L7.6,12.6Z" fill="#4a4a4a"/></svg>
<svg class="ic" style="left:984px;top:619px" width="16" height="16" viewBox="0 0 16 16"><path d="M4.5,6 V1.5 H14.5 V14.5 H8" fill="none" stroke="#5a5a5a" stroke-width="1.3"/><rect x="1.6" y="6.6" width="5.8" height="8" fill="#f5f5f5" stroke="#5a5a5a" stroke-width="1.3"/></svg>
<div class="vsep" style="left:1009px;top:619px;height:15px"></div>
<span class="tab" style="left:1022px;font-size:11.0px;letter-spacing:-0.280px">Console</span>
<span class="tab" style="left:1073px;font-size:11.0px;letter-spacing:-0.283px;color:#333">Elements</span>
<span class="tab" style="left:1128.5px;font-size:11.0px;letter-spacing:-0.366px">Sources</span>
<span class="tab" style="left:1179.3px;font-size:11.0px;letter-spacing:0.065px">Network</span>
<span class="tab" style="left:1233.2px;font-size:11.0px;letter-spacing:-0.083px">Timeline</span>
<span class="tab" style="left:1286.3px;font-size:11.0px;letter-spacing:-0.110px">Profiles</span>
<span class="tab" style="left:1334.8px;font-size:11.0px;letter-spacing:0.070px">Application</span>
<span class="tab" style="left:1402px;font-size:11.0px;letter-spacing:0.070px">Audits</span>
<span class="tab" style="left:1445.4px;font-size:11.0px;letter-spacing:-0.168px">Security</span>
<span class="tab" style="left:1497px;font-size:11.0px;letter-spacing:-0.180px">AdBlock</span>
<div class="sel" style="left:1066px;width:56px"></div>
<svg class="ic" style="left:1831px;top:621px" width="11" height="11" viewBox="0 0 11 11"><path d="M5.5,0.6 L10.6,9.9 H0.4Z" fill="#f5a60c"/><rect x="5" y="3.6" width="1.1" height="3.4" fill="#fff"/><rect x="5" y="7.8" width="1.1" height="1.1" fill="#fff"/></svg>
<span class="tab" style="left:1845px;font-size:11.0px;letter-spacing:0.170px">4</span>
<div class="vsep" style="left:1854px;top:619px;height:14px"></div>
<i class="kd" style="left:1871px;top:621.6px"></i>
<i class="kd" style="left:1871px;top:625.8px"></i>
<i class="kd" style="left:1871px;top:630px"></i>
<svg class="ic" style="left:1891px;top:622px" width="10" height="10" viewBox="0 0 10 10"><path d="M1.5,1.5 L8.5,8.5 M8.5,1.5 L1.5,8.5" stroke="#444" stroke-width="1.6"/></svg>
<div class="row" style="left:966px;top:643px"><span class="tg">&lt;html&gt;</span></div>
<div class="row" style="left:976px;top:657px"><span class="tx">#shadow-root (open)</span></div>
<svg class="ic" style="left:967px;top:658px" width="7" height="8" viewBox="0 0 7 8"><path d="M0.5,0.5 L6.2,4 L0.5,7.5Z" fill="#6e6e6e"/></svg>
<div class="row" style="left:976px;top:671px"><span class="tg">&lt;head&gt;</span><span class="tx">…</span><span class="tg">&lt;/head&gt;</span></div>
<svg class="ic" style="left:967px;top:672px" width="7" height="8" viewBox="0 0 7 8"><path d="M0.5,0.5 L6.2,4 L0.5,7.5Z" fill="#6e6e6e"/></svg>
<div class="row" style="left:976px;top:685px"><span class="tg">&lt;body&gt;</span></div>
<svg class="ic" style="left:966px;top:687px" width="9" height="7" viewBox="0 0 9 7"><path d="M0.5,0.5 H8.5 L4.5,6.5Z" fill="#555"/></svg>
<div class="row" style="left:989px;top:698px"><span class="tg">&lt;div </span><span class="an">id</span><span class="tg">="</span><span class="av">viewport</span><span class="tg">"&gt;</span></div>
<svg class="ic" style="left:976px;top:700px" width="9" height="7" viewBox="0 0 9 7"><path d="M0.5,0.5 H8.5 L4.5,6.5Z" fill="#555"/></svg>
<div class="side"></div>
<div class="stabline"></div>
<div class="stab"></div>
<span class="tab st" style="left:1596.5px;font-size:11.0px;letter-spacing:-0.394px">Styles</span>
<span class="tab st" style="left:1633px;font-size:11.0px;letter-spacing:0.055px">Computed</span>
<span class="tab st" style="left:1694px;font-size:11.0px;letter-spacing:-0.328px">Event Listeners</span>
<span class="tab st" style="left:1773.5px;font-size:11.0px;letter-spacing:-0.101px">DOM Breakpoints</span>
<span class="tab chev2" style="left:1869px;top:642px">»</span>
<span class="tab flt" style="left:1591.4px;font-size:11.0px;letter-spacing:-0.108px">Filter</span>
<span class="mono hov" style="left:1824px">:hov</span><span class="mono hov" style="left:1857px">.cls</span>
<svg class="ic" style="left:1891px;top:670px" width="10" height="12" viewBox="0 0 10 12"><path d="M0.8,6 H10 M5.5,1 V11" stroke="#555" stroke-width="1.3"/></svg>
<div class="fline"></div>
<span class="mono es" style="left:1591px"><span style="color:#888">element.style</span> {</span>
</div>
<div style="position:absolute;left:951px;top:0;width:1px;height:702px;background:#3a3a3a"></div>
<div style="position:absolute;left:952px;top:0;width:1px;height:702px;background:#1b7fe0"></div>
</body></html>
